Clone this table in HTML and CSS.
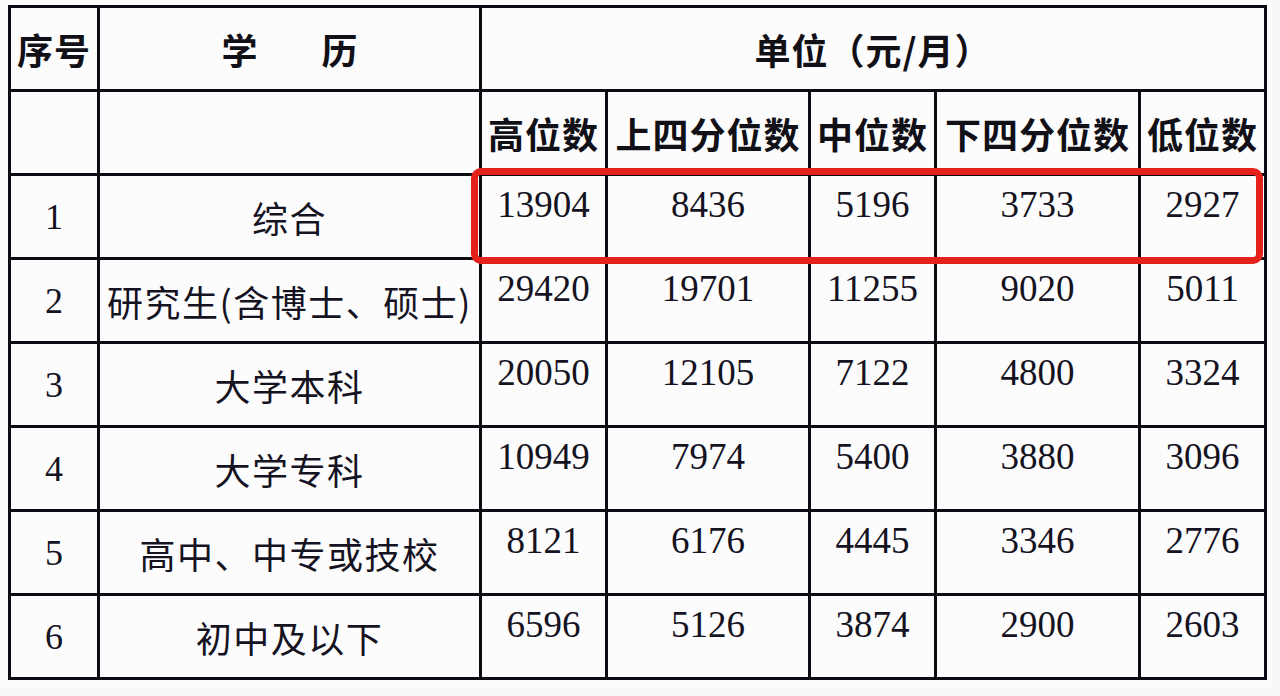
FILE: index.html
```html
<!DOCTYPE html>
<html lang="zh-CN">
<head>
<meta charset="utf-8">
<title>学历工资价位</title>
<link rel="stylesheet" href="styles.css">
</head>
<body>
<div class="sheet">
  <table class="wage">
    <colgroup>
      <col class="c-idx"><col class="c-edu"><col class="c-n"><col class="c-w"><col class="c-n"><col class="c-w2"><col class="c-n2">
    </colgroup>
    <thead>
      <tr>
        <th class="h">序号</th>
        <th class="h edu-head">学　历</th>
        <th class="h" colspan="5">单位（元/月）</th>
      </tr>
      <tr>
        <th class="h"></th>
        <th class="h"></th>
        <th class="h">高位数</th>
        <th class="h">上四分位数</th>
        <th class="h">中位数</th>
        <th class="h">下四分位数</th>
        <th class="h">低位数</th>
      </tr>
    </thead>
    <tbody>
      <tr><td class="idx">1</td><td class="edu">综合</td><td class="num">13904</td><td class="num">8436</td><td class="num">5196</td><td class="num">3733</td><td class="num">2927</td></tr>
      <tr><td class="idx">2</td><td class="edu">研究生(含博士、硕士)</td><td class="num">29420</td><td class="num">19701</td><td class="num">11255</td><td class="num">9020</td><td class="num">5011</td></tr>
      <tr><td class="idx">3</td><td class="edu">大学本科</td><td class="num">20050</td><td class="num">12105</td><td class="num">7122</td><td class="num">4800</td><td class="num">3324</td></tr>
      <tr><td class="idx">4</td><td class="edu">大学专科</td><td class="num">10949</td><td class="num">7974</td><td class="num">5400</td><td class="num">3880</td><td class="num">3096</td></tr>
      <tr><td class="idx">5</td><td class="edu">高中、中专或技校</td><td class="num">8121</td><td class="num">6176</td><td class="num">4445</td><td class="num">3346</td><td class="num">2776</td></tr>
      <tr><td class="idx">6</td><td class="edu">初中及以下</td><td class="num">6596</td><td class="num">5126</td><td class="num">3874</td><td class="num">2900</td><td class="num">2603</td></tr>
    </tbody>
  </table>
  <div class="highlight"></div>
</div>
</body>
</html>
```

FILE: styles.css
```css
html, body {
  margin: 0;
  padding: 0;
  background: #f6f6f7;
}

body {
  width: 1280px;
  height: 696px;
  overflow: hidden;
}

.sheet {
  position: relative;
  width: 1272px;
  height: 688px;
  padding: 5px 0 0 8px;
  box-sizing: border-box;
  background: #fcfcfd;
}

.wage {
  border-collapse: collapse;
  table-layout: fixed;
  width: 1256px;
  background: #fcfcfd;
  color: #15131f;
}

.c-idx { width: 89px; }
.c-edu { width: 382px; }
.c-n { width: 126px; }
.c-w { width: 203px; }
.c-w2 { width: 204px; }
.c-n2 { width: 126px; }

.wage th,
.wage td {
  border: 3px solid #0d0c12;
  padding: 0;
  height: 81px;
  text-align: center;
  white-space: nowrap;
  overflow: visible;
}

.wage .h {
  font-family: "Noto Sans CJK SC", "Noto Sans", sans-serif;
  font-weight: 700;
  font-size: 36px;
  letter-spacing: 1px;
  color: #111016;
  vertical-align: middle;
  line-height: 40px;
}

.wage .edu-head {
  letter-spacing: 14px;
  padding-left: 14px;
}

.wage .idx {
  font-family: "Liberation Serif", "Times New Roman", serif;
  font-size: 36px;
  vertical-align: middle;
  line-height: 40px;
}

.wage .edu {
  font-family: "Noto Sans CJK SC", "Noto Sans", sans-serif;
  font-weight: 400;
  font-size: 36px;
  letter-spacing: 1.5px;
  vertical-align: middle;
  line-height: 40px;
}

.wage .num {
  font-family: "Liberation Serif", "Times New Roman", serif;
  font-size: 37px;
  line-height: 40px;
  vertical-align: top;
  padding-top: 9px;
  height: 72px;
}

.highlight {
  position: absolute;
  left: 471px;
  top: 168px;
  width: 792px;
  height: 96px;
  box-sizing: border-box;
  border: 7px solid #e5211b;
  border-radius: 10px;
  pointer-events: none;
}
```
